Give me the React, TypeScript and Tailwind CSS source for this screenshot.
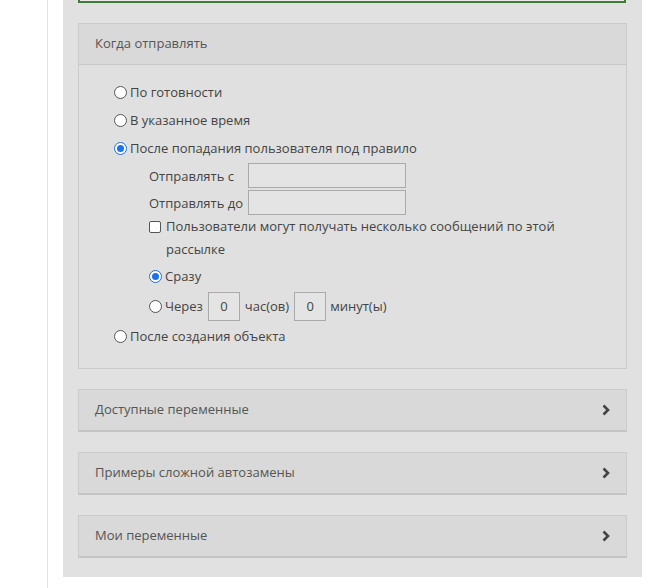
import React, { useState } from 'react';

const font = { fontFamily: '"Open Sans", "Liberation Sans", sans-serif' };

const Radio: React.FC<{ checked?: boolean }> = ({ checked }) => (
  <div className={`w-[13px] h-[13px] rounded-full border shrink-0 bg-white flex items-center justify-center ${checked ? 'border-[#1a6fe0]' : 'border-[#555]'}`}>
    {checked && <div className="w-[7px] h-[7px] rounded-full bg-[#1a73e8]" />}
  </div>
);

const Chevron = () => (
  <svg width="10" height="12" viewBox="0 0 10 12" className="text-[#444]">
    <polyline points="2.5,1.5 7,6 2.5,10.5" fill="none" stroke="currentColor" strokeWidth="2.6" />
  </svg>
);

const Collapsed: React.FC<{ title: string }> = ({ title }) => (
  <div className="h-[43px] bg-[#d9d9d9] border border-[#cbcbcb] border-b-2 border-b-[#c4c4c4] flex items-center justify-between pl-4 pr-[15px] mt-[20px]">
    <span className="text-[13px] text-[#555]">{title}</span>
    <Chevron />
  </div>
);

export default function App() {
  const [mode] = useState('rule');
  return (
    <div className="w-[659px] h-[588px] bg-white flex overflow-hidden" style={font}>
      <div className="w-[48px] border-r border-[#e3e3e3]" />
      <div className="w-[15px]" />
      <div className="w-[579px] h-[577px] bg-[#e1e1e1] px-[15px]">
        <div className="h-[3px] border-2 border-t-0 border-[#3f7c37] bg-[#ececec] mr-[1px]" />
        <div className="mt-[20px] border border-[#cbcbcb] bg-[#e0e0e0]">
          <div className="h-[41px] bg-[#d9d9d9] border-b border-[#c8c8c8] flex items-center pl-4 text-[13px] text-[#555]">
            Когда отправлять
          </div>
          <div className="pl-[35px] pt-[13px] pb-[17px] text-[13px] text-[#444] leading-[28px]">
            <label className="flex items-center gap-[3px] h-[28px]"><Radio /> По готовности</label>
            <label className="flex items-center gap-[3px] h-[28px]"><Radio /> В указанное время</label>
            <label className="flex items-center gap-[3px] h-[28px]"><Radio checked={mode === 'rule'} /> После попадания пользователя под правило</label>
            <div className="pl-[35px]">
              <div className="flex items-center h-[27px]">
                <span className="w-[99px]">Отправлять с</span>
                <span className="w-[158px] h-[25px] border border-[#aaa] bg-[#e4e4e4]" />
              </div>
              <div className="flex items-center h-[27px]">
                <span className="w-[99px]">Отправлять до</span>
                <span className="w-[158px] h-[25px] border border-[#aaa] bg-[#e4e4e4]" />
              </div>
              <div className="flex items-start gap-[5px] leading-[23px] pr-[40px] -mt-[1px]">
                <span className="w-[12px] h-[12px] border border-[#555] bg-white rounded-[2px] mt-[6px] shrink-0" />
                <span>Пользователи могут получать несколько сообщений по этой рассылке</span>
              </div>
              <label className="flex items-center gap-[3px] h-[30px]"><Radio checked /> Сразу</label>
              <div className="flex items-center h-[30px]">
                <Radio />
                <span className="ml-[3px] mr-[5px]">Через</span>
                <span className="w-[32px] h-[29px] border border-[#aaa] bg-[#e4e4e4] flex items-center justify-center">0</span>
                <span className="mx-[5px]">час(ов)</span>
                <span className="w-[32px] h-[29px] border border-[#aaa] bg-[#e4e4e4] flex items-center justify-center">0</span>
                <span className="ml-[4px]">минут(ы)</span>
              </div>
            </div>
            <label className="flex items-center gap-[3px] h-[30px]"><Radio /> После создания объекта</label>
          </div>
        </div>
        <Collapsed title="Доступные переменные" />
        <Collapsed title="Примеры сложной автозамены" />
        <Collapsed title="Мои переменные" />
      </div>
    </div>
  );
}
